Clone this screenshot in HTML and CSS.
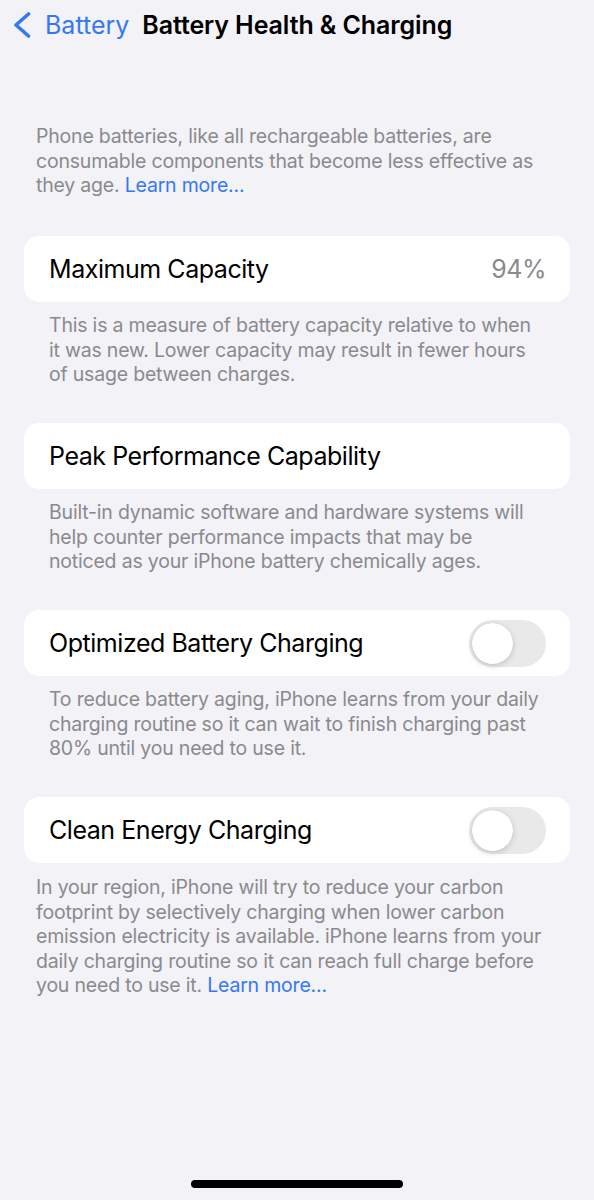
FILE: index.html
```html
<!DOCTYPE html>
<html lang="en">
<head>
    <meta charset="UTF-8">
    <meta name="viewport" content="width=device-width, initial-scale=1.0">
    <title>Battery Health &amp; Charging</title>
    <link rel="stylesheet" href="styles.css">
</head>
<body>
    <header class="nav">
        <svg class="back-icon" viewBox="0 0 18 28" width="18" height="28">
            <path d="M15.5 3 L3 14 L15.5 25" fill="none" stroke="#3478f6" stroke-width="3.6" stroke-linecap="round" stroke-linejoin="round"/>
        </svg>
        <span class="back-label">Battery</span>
        <h1 class="title">Battery Health &amp; Charging</h1>
    </header>

    <p class="intro">Phone batteries, like all rechargeable batteries, are consumable components that become less effective as they age. <a href="#">Learn more...</a></p>

    <section class="group">
        <div class="cell">
            <span>Maximum Capacity</span>
            <span class="value">94%</span>
        </div>
        <p class="note">This is a measure of battery capacity relative to when it was new. Lower capacity may result in fewer hours of usage between charges.</p>
    </section>

    <section class="group">
        <div class="cell">
            <span>Peak Performance Capability</span>
        </div>
        <p class="note">Built-in dynamic software and hardware systems will help counter performance impacts that may be noticed as your iPhone battery chemically ages.</p>
    </section>

    <section class="group">
        <div class="cell">
            <span>Optimized Battery Charging</span>
            <div class="switch"><div class="knob"></div></div>
        </div>
        <p class="note">To reduce battery aging, iPhone learns from your daily charging routine so it can wait to finish charging past 80% until you need to use it.</p>
    </section>

    <section class="group">
        <div class="cell">
            <span>Clean Energy Charging</span>
            <div class="switch"><div class="knob"></div></div>
        </div>
        <p class="note note-wide">In your region, iPhone will try to reduce your carbon footprint by selectively charging when lower carbon emission electricity is available. iPhone learns from your daily charging routine so it can reach full charge before you need to use it. <a href="#">Learn more...</a></p>
    </section>

    <div class="home-indicator"></div>
</body>
</html>
```

FILE: styles.css
```css
body {
    margin: 0;
    background-color: #f2f2f7;
    font-family: Inter, "Noto Sans", sans-serif;
    color: #000;
}
a {
    color: #3478f6;
    text-decoration: none;
}
.nav {
    display: flex;
    align-items: center;
    height: 50px;
    padding-left: 13px;
}
.back-icon {
    flex: none;
}
.back-label {
    margin-left: 14px;
    font-size: 25px;
    color: #3478f6;
}
.title {
    margin: 0 0 0 13px;
    font-size: 25px;
    font-weight: 600;
    letter-spacing: -0.1px;
}
.intro {
    margin: 74px 0 0;
    padding: 0 36px;
    font-size: 19.5px;
    line-height: 24.5px;
    letter-spacing: -0.2px;
    color: #8a8a8e;
}
.group {
    margin: 36.5px 24px 0;
}
.intro + .group {
    margin-top: 38.5px;
}
.cell {
    display: flex;
    align-items: center;
    justify-content: space-between;
    height: 66px;
    padding: 0 24px 0 25px;
    background-color: #fff;
    border-radius: 15px;
    font-size: 25px;
    letter-spacing: -0.45px;
}
.value {
    color: #8a8a8e;
}
.switch {
    display: flex;
    align-items: center;
    width: 77px;
    height: 47px;
    padding: 3px;
    box-sizing: border-box;
    background-color: #e9e9ea;
    border-radius: 24px;
}
.knob {
    width: 41px;
    height: 41px;
    border-radius: 50%;
    background-color: #fff;
    box-shadow: 0 2px 6px rgba(0, 0, 0, 0.15), 0 0 1px rgba(0, 0, 0, 0.2);
}
.note {
    margin: 0;
    padding: 11px 29px 0 25px;
    font-size: 19.5px;
    line-height: 24.5px;
    letter-spacing: -0.2px;
    color: #8a8a8e;
}
.note-wide {
    padding: 12px 12px 0;
}
.home-indicator {
    position: fixed;
    left: 191px;
    top: 1180px;
    width: 212px;
    height: 8px;
    border-radius: 4px;
    background-color: #000;
}
```
